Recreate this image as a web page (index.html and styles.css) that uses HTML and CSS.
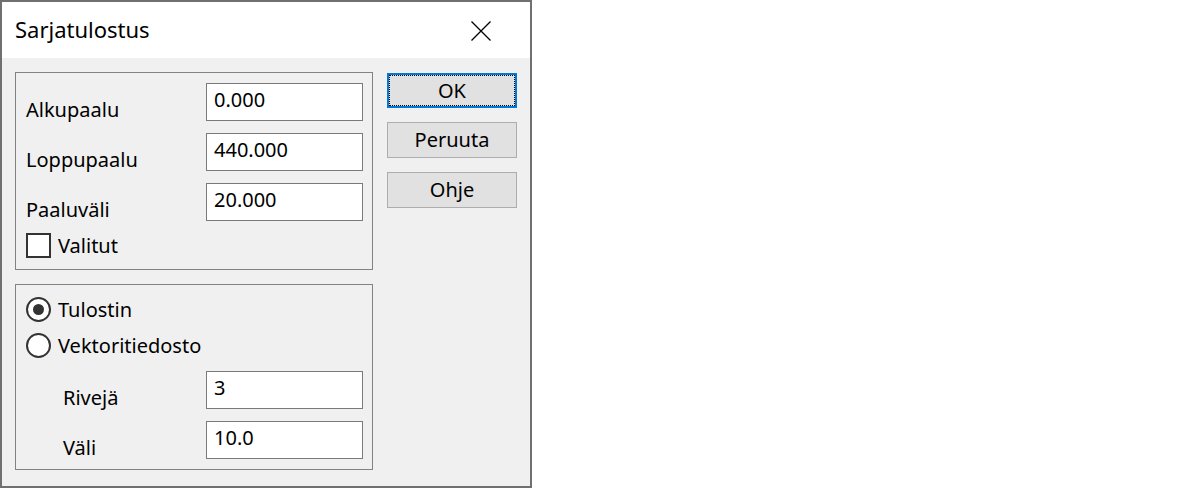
FILE: index.html
```html
<!DOCTYPE html>
<html lang="fi">
<head>
  <meta charset="UTF-8" />
  <title>Sarjatulostus</title>
  <link rel="stylesheet" href="styles.css">
</head>
<body>
  <div class="dialog">
    <div class="titlebar">
      <div class="title">Sarjatulostus</div>
      <svg class="close" width="20" height="20" viewBox="0 0 20 20">
        <path d="M0.5 0.5 L19.5 19.5 M19.5 0.5 L0.5 19.5" stroke="#000" stroke-width="1.3" fill="none" />
      </svg>
    </div>

    <div class="client">
      <div class="groups">
        <div class="group group-range">
          <div class="row">
            <label>Alkupaalu</label>
            <div class="field">0.000</div>
          </div>
          <div class="row">
            <label>Loppupaalu</label>
            <div class="field">440.000</div>
          </div>
          <div class="row">
            <label>Paaluväli</label>
            <div class="field">20.000</div>
          </div>
          <div class="check-row">
            <span class="checkbox"></span>
            <span>Valitut</span>
          </div>
        </div>

        <div class="group group-output">
          <div class="check-row">
            <span class="radio checked"></span>
            <span>Tulostin</span>
          </div>
          <div class="check-row second">
            <span class="radio"></span>
            <span>Vektoritiedosto</span>
          </div>
          <div class="row indent first">
            <label>Rivejä</label>
            <div class="field">3</div>
          </div>
          <div class="row indent">
            <label>Väli</label>
            <div class="field">10.0</div>
          </div>
        </div>
      </div>

      <div class="buttons">
        <button class="btn default">OK</button>
        <button class="btn">Peruuta</button>
        <button class="btn">Ohje</button>
      </div>
    </div>
  </div>
</body>
</html>
```

FILE: styles.css
```css
body {
  margin: 0;
  background-color: #ffffff;
  font-family: "Noto Sans", "Open Sans", sans-serif;
  font-size: 20px;
  color: #000;
}

.dialog {
  width: 532px;
  height: 488px;
  box-sizing: border-box;
  border: 2px solid #707070;
  background-color: #f0f0f0;
  display: flex;
  flex-direction: column;
}

.titlebar {
  height: 56px;
  background-color: #ffffff;
  display: flex;
  align-items: center;
  justify-content: space-between;
  padding: 0 39px 0 13px;
}

.title {
  font-size: 22px;
  line-height: 28px;
  margin-top: -2px;
}

.close {
  display: block;
  margin-top: 2px;
}

.client {
  display: flex;
  gap: 14px;
  padding: 14px 0 0 13px;
}

.groups {
  display: flex;
  flex-direction: column;
  gap: 14px;
}

.group {
  width: 358px;
  box-sizing: border-box;
  border: 1px solid #828282;
}

.group-range {
  height: 198px;
  padding: 10px 9px 0 10px;
}

.group-output {
  height: 186px;
  padding: 12px 9px 0 10px;
}

.row {
  display: flex;
  justify-content: space-between;
  height: 38px;
  margin-bottom: 12px;
}

.row label {
  line-height: 24px;
  margin-top: 15px;
}

.row.indent label {
  margin-left: 37px;
}

.row.first {
  margin-top: 13px;
}

.field {
  width: 157px;
  height: 38px;
  box-sizing: border-box;
  border: 1px solid #7a7a7a;
  background-color: #ffffff;
  padding: 0 7px;
  line-height: 32px;
}

.check-row {
  display: flex;
  align-items: center;
  gap: 7px;
  height: 25px;
}

.check-row.second {
  margin-top: 11px;
}

.checkbox {
  width: 25px;
  height: 25px;
  box-sizing: border-box;
  border: 2px solid #333333;
  background-color: #ffffff;
}

.radio {
  width: 25px;
  height: 25px;
  box-sizing: border-box;
  border: 2px solid #333333;
  border-radius: 50%;
  background-color: #ffffff;
  display: flex;
  align-items: center;
  justify-content: center;
}

.radio.checked::after {
  content: "";
  width: 11px;
  height: 11px;
  border-radius: 50%;
  background-color: #333333;
}

.buttons {
  display: flex;
  flex-direction: column;
  gap: 14px;
  padding-top: 1px;
}

.btn {
  width: 130px;
  height: 36px;
  box-sizing: border-box;
  border: 1px solid #adadad;
  background-color: #e1e1e1;
  font-family: inherit;
  font-size: 20px;
  color: #000;
  padding: 0;
  line-height: 30px;
}

.btn.default {
  height: 35px;
  border: 2px solid #0078d7;
  outline: 1px dotted #000;
  outline-offset: -3px;
}
```
